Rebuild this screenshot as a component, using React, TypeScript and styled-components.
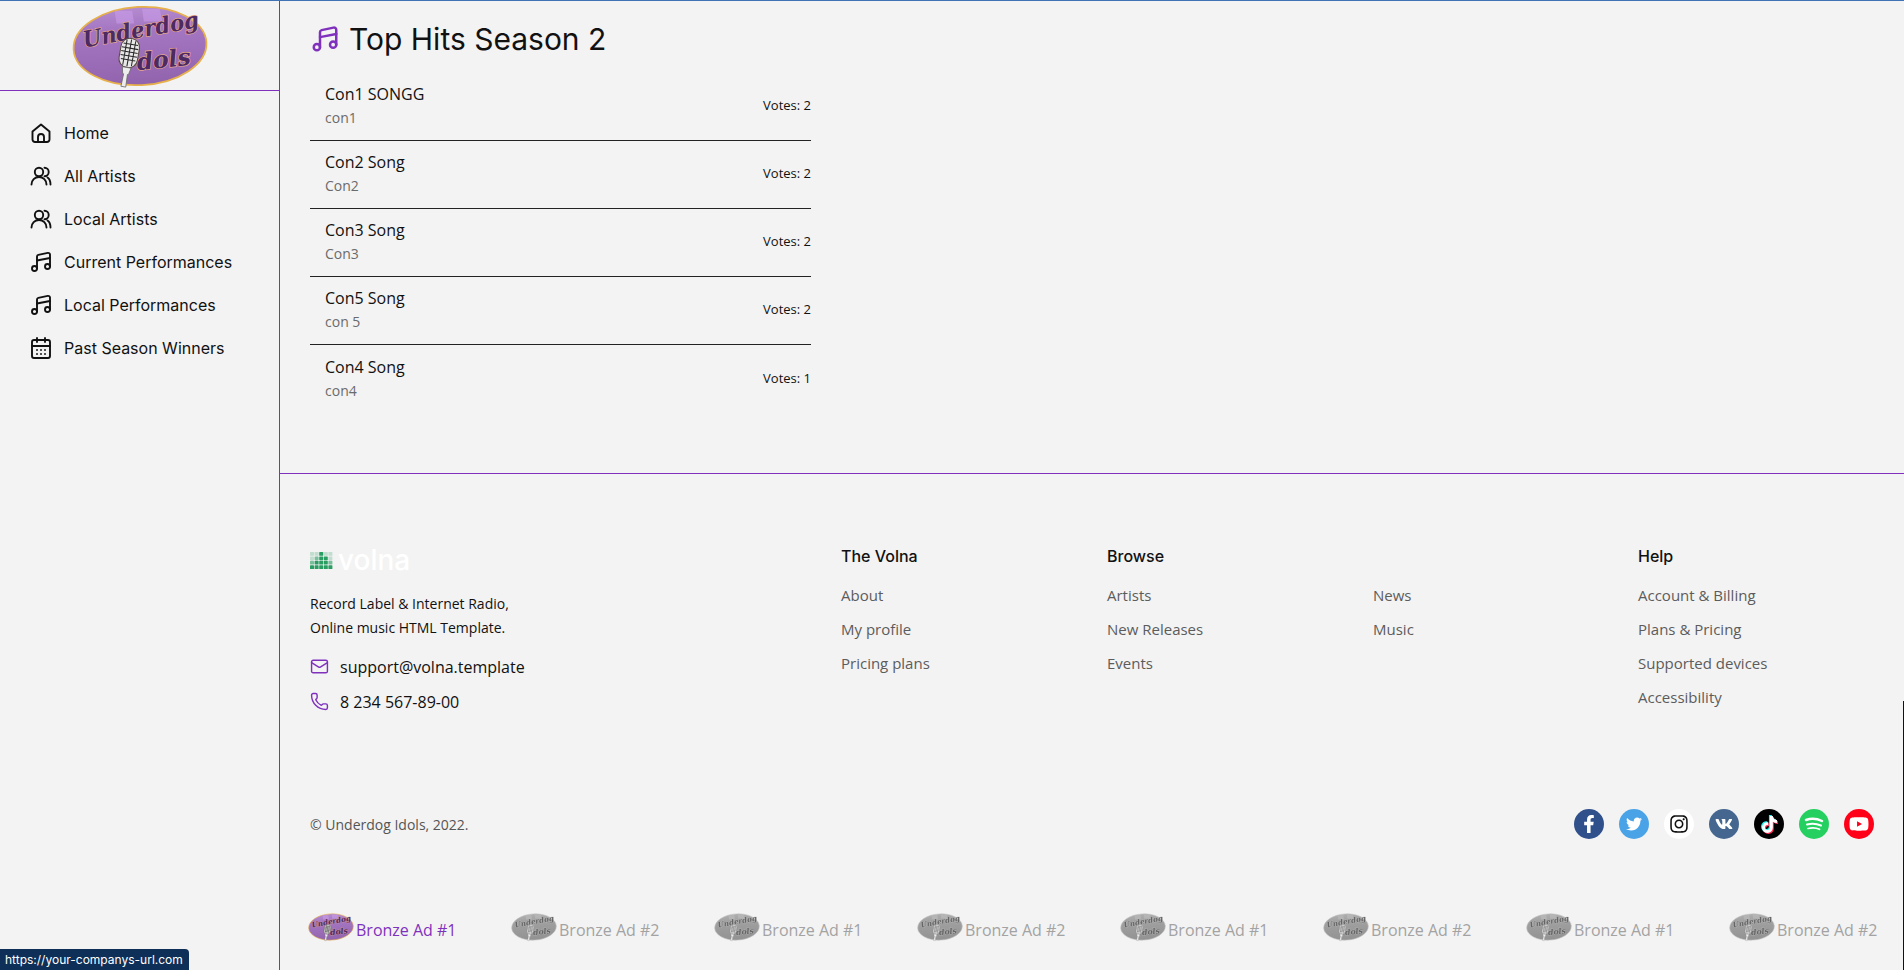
import React, { useId } from 'react'
import styled, { createGlobalStyle } from 'styled-components'
import { CalendarDays, Mail, Phone } from 'lucide-react'
import { FaFacebookF, FaInstagram, FaTiktok, FaTwitter, FaVk, FaYoutube } from 'react-icons/fa'

const purple = '#7f31bd'

const GlobalStyle = createGlobalStyle`
  html, body {
    margin: 0;
    padding: 0;
    height: 100%;
    overflow: hidden;
    background: #f3f3f3;
    font-family: "Open Sans", "Liberation Sans", sans-serif;
    color: #111;
  }
  * { box-sizing: border-box; }
`

const Page = styled.div`
  display: flex;
  height: 970px;
  border-top: 1px solid #3f73b5;
  position: relative;
`

const Sidebar = styled.aside`
  width: 280px;
  flex: none;
  border-right: 1px solid ${purple};
`

const LogoBar = styled.div`
  height: 90px;
  display: flex;
  justify-content: center;
  align-items: center;
  border-bottom: 1px solid ${purple};
`

const Nav = styled.nav`
  display: flex;
  flex-direction: column;
  gap: 15px;
  padding: 28px 0 0 29px;
`

const NavItem = styled.a`
  display: flex;
  align-items: center;
  gap: 11px;
  height: 28px;
  font: 400 16px "Inter", sans-serif;
  color: #111;
  svg { flex: none; }
`

const Main = styled.main`
  flex: 1;
  display: flex;
  flex-direction: column;
  min-width: 0;
`

const Content = styled.section`
  height: 473px;
  padding: 19px 0 0 30px;
  border-bottom: 1px solid ${purple};
`

const Title = styled.h1`
  display: flex;
  align-items: center;
  gap: 9px;
  margin: 0 0 15px;
  height: 38px;
  font: 400 30px "Inter", sans-serif;
  color: #111;
  svg { color: ${purple}; }
`

const SongList = styled.ul`
  width: 501px;
  margin: 0;
  padding: 0;
  list-style: none;
`

const SongRow = styled.li`
  display: flex;
  align-items: center;
  justify-content: space-between;
  height: 68px;
  padding: 0 0 2px 15px;
  border-bottom: 1px solid #222;
  &:last-child { border-bottom: 0; }
`

const SongName = styled.div`
  font-size: 16px;
  line-height: 24px;
  color: #111;
`

const SongArtist = styled.div`
  margin-top: 1px;
  font-size: 14px;
  line-height: 22px;
  color: #6b6b6b;
`

const Votes = styled.div`
  margin-top: -1px;
  font-size: 13px;
  color: #111;
`

const Footer = styled.footer`
  flex: 1;
  padding: 69px 30px 0 30px;
`

const FooterGrid = styled.div`
  display: grid;
  grid-template-columns: 531px 266px 266px 265px 1fr;
  height: 266px;
`

const VolnaLogo = styled.div`
  display: flex;
  align-items: center;
  gap: 5px;
  height: 26px;
  margin-top: 4px;
  font: 500 28px "Inter", sans-serif;
  color: #fff;
`

const About = styled.p`
  margin: 19px 0 9px;
  font-size: 14px;
  line-height: 24px;
  color: #111;
`

const ContactRow = styled.div`
  display: flex;
  align-items: center;
  gap: 11px;
  height: 35px;
  font-size: 16px;
  color: #111;
  svg { color: ${purple}; flex: none; }
`

const ColumnTitle = styled.h4`
  margin: 0 0 9px;
  height: 26px;
  font: 500 16px/26px "Inter", sans-serif;
  color: #111;
`

const FooterLink = styled.a`
  display: block;
  height: 34px;
  font-size: 15px;
  line-height: 34px;
  color: #5c5c5c;
`

const BottomRow = styled.div`
  display: flex;
  align-items: center;
  justify-content: space-between;
  height: 30px;
`

const Copyright = styled.div`
  font-size: 14px;
  color: #555;
`

const Socials = styled.div`
  display: flex;
  gap: 15px;
`

const SocialIcon = styled.a<{ $bg: string; $fg?: string }>`
  width: 30px;
  height: 30px;
  border-radius: 50%;
  display: flex;
  align-items: center;
  justify-content: center;
  background: ${(p) => p.$bg};
  color: ${(p) => p.$fg || '#fff'};
`

const AdRow = styled.div`
  display: grid;
  grid-template-columns: repeat(8, 203px);
  margin-top: 74px;
`

const Ad = styled.a<{ $active?: boolean }>`
  display: flex;
  align-items: center;
  gap: 2px;
  height: 34px;
  margin-left: -2px;
  font-size: 16px;
  white-space: nowrap;
  color: ${(p) => (p.$active ? purple : '#a3a3a3')};
  svg {
    margin-top: -7px;
    opacity: ${(p) => (p.$active ? 1 : 0.75)};
  }
`

const UrlTip = styled.div`
  position: absolute;
  left: 0;
  bottom: 0;
  height: 21px;
  padding: 0 6px 0 5px;
  border-radius: 0 4px 0 0;
  background: #0e2f57;
  color: #fff;
  font: 400 12px/22px "Inter", sans-serif;
`

const ScrollEdge = styled.div`
  position: absolute;
  right: 0;
  top: 700px;
  bottom: 0;
  width: 1px;
  background: #111;
`

type IconProps = { size?: number; strokeWidth?: number }

function HomeIcon({ size = 24, strokeWidth = 1.9 }: IconProps) {
  return (
    <svg width={size} height={size} viewBox="0 0 24 24" fill="none" stroke="currentColor" strokeWidth={strokeWidth} strokeLinejoin="round" strokeLinecap="round">
      <path d="M3.500 10.500 12 3.500l8.500 7V18.500a2.500 2.500 0 0 1-2.500 2.500H6a2.500 2.500 0 0 1-2.500-2.500z" />
      <path d="M9 21v-5a3 3 0 0 1 6 0v5" />
    </svg>
  )
}

function UsersIcon({ size = 24, strokeWidth = 1.9 }: IconProps) {
  return (
    <svg width={size} height={size} viewBox="0 0 24 24" fill="none" stroke="currentColor" strokeWidth={strokeWidth} strokeLinecap="round">
      <circle cx="10" cy="8" r="4.200" />
      <path d="M2.500 20.500c0-4.200 3.300-7.500 7.500-7.500s7.500 3.300 7.500 7.500" />
      <path d="M15.500 3.800a4.200 4.200 0 0 1 0 8.400" />
      <path d="M18.500 13.500c1.900 1.300 3 3.800 3 7" />
    </svg>
  )
}

function MusicIcon({ size = 24, strokeWidth = 1.9 }: IconProps) {
  return (
    <svg width={size} height={size} viewBox="0 0 24 24" fill="none" stroke="currentColor" strokeWidth={strokeWidth} strokeLinejoin="round" strokeLinecap="round">
      <path d="M8 18.500V6.500c0-.8.500-1.400 1.300-1.600l9.500-2c1.100-.2 2.200.6 2.200 1.700v12" />
      <path d="M8 10.500 21 8" />
      <circle cx="5.500" cy="18.500" r="2.500" />
      <circle cx="18.500" cy="16.500" r="2.500" />
    </svg>
  )
}

function Logo({ width, height, gray }: { width: number; height: number; gray?: boolean }) {
  const id = useId()
  return (
    <svg width={width} height={height} viewBox="0 0 140 90" style={gray ? { filter: 'grayscale(1)' } : undefined}>
      <defs>
        <linearGradient id={id} x1="0" y1="0" x2="0" y2="1">
          <stop offset="0" stopColor="#b48bcf" />
          <stop offset="0.25" stopColor="#a678c4" />
          <stop offset="1" stopColor="#9263ad" />
        </linearGradient>
      </defs>
      <ellipse cx="70" cy="45" rx="68" ry="40" fill={`url(#${id})`} stroke="#e6b04a" strokeWidth="1.8" transform="rotate(-3 70 45)" />
      <path d="M44 9h18l2 13H46zM72 7h18l3 13H74z" fill="#c79ae6" opacity="0.65" />
      <text x="72" y="36" textAnchor="middle" transform="rotate(-10 72 36)" fontFamily="DejaVu Serif" fontStyle="italic" fontWeight="700" fontSize="23" fill="#4d2a63" stroke="#e7a98a" strokeWidth="1.400" paintOrder="stroke" textLength="120" lengthAdjust="spacingAndGlyphs">Underdog</text>
      <text x="95" y="67" textAnchor="middle" transform="rotate(-6 95 67)" fontFamily="DejaVu Serif" fontStyle="italic" fontWeight="700" fontSize="24" fill="#4d2a63" stroke="#e7a98a" strokeWidth="1.400" paintOrder="stroke">dols</text>
      <g transform="rotate(10 58 55)">
        <rect x="49" y="37" width="19" height="30" rx="9" fill="#e8e8e8" stroke="#55483a" strokeWidth="1" />
        <path d="M51 43h15M50 47h17M50 51h17M50 55h17M51 59h15M54 39v26M58.500 38v28M63 39v26" stroke="#2b2b2b" strokeWidth="1.100" />
        <path d="M54 67h9l-1.500 7h-1l.5 13h-5l.5-13h-1z" fill="#ededed" stroke="#6b6b6b" strokeWidth="0.800" />
      </g>
    </svg>
  )
}

function Spotify() {
  return (
    <svg width="20" height="16" viewBox="0 0 20 16" fill="none" stroke="#fff" strokeLinecap="round">
      <path d="M2 4c5-1.800 11-1.400 16 1" strokeWidth="2.400" />
      <path d="M3 8.500c4.500-1.300 9.500-1 14 1" strokeWidth="2" />
      <path d="M4 12.500c4-1 8-.8 11.500.8" strokeWidth="1.700" />
    </svg>
  )
}

function VolnaMark() {
  const cells = [
    [0, 0, 0.25], [1, 0, 0.25], [2, 0, 1], [3, 0, 0.25], [4, 0, 0.25],
    [0, 1, 0.25], [1, 1, 0.6], [2, 1, 1], [3, 1, 1], [4, 1, 0.25],
    [0, 2, 0.6], [1, 2, 1], [2, 2, 1], [3, 2, 1], [4, 2, 0.6],
    [0, 3, 1], [1, 3, 1], [2, 3, 1], [3, 3, 1], [4, 3, 1],
  ]
  return (
    <svg width="23" height="17" viewBox="0 0 23 17">
      {cells.map(([x, y, o]) => (
        <rect key={`${x}-${y}`} x={x * 4.6} y={y * 4.4} width="4" height="3.800" rx="0.600" fill="#2a9d63" opacity={o} />
      ))}
    </svg>
  )
}

const navItems = [
  { label: 'Home', Icon: HomeIcon },
  { label: 'All Artists', Icon: UsersIcon },
  { label: 'Local Artists', Icon: UsersIcon },
  { label: 'Current Performances', Icon: MusicIcon },
  { label: 'Local Performances', Icon: MusicIcon },
  { label: 'Past Season Winners', Icon: CalendarDays },
]

const songs = [
  { name: 'Con1 SONGG', artist: 'con1', votes: 2 },
  { name: 'Con2 Song', artist: 'Con2', votes: 2 },
  { name: 'Con3 Song', artist: 'Con3', votes: 2 },
  { name: 'Con5 Song', artist: 'con 5', votes: 2 },
  { name: 'Con4 Song', artist: 'con4', votes: 1 },
]

const linkColumns = [
  { title: 'The Volna', links: ['About', 'My profile', 'Pricing plans'] },
  { title: 'Browse', links: ['Artists', 'New Releases', 'Events'] },
  { title: '\u00a0', links: ['News', 'Music'] },
  { title: 'Help', links: ['Account & Billing', 'Plans & Pricing', 'Supported devices', 'Accessibility'] },
]

const ads = [1, 2, 1, 2, 1, 2, 1, 2]

export default function App() {
  return (
    <>
      <GlobalStyle />
      <Page>
        <Sidebar>
          <LogoBar>
            <Logo width={140} height={88} />
          </LogoBar>
          <Nav>
            {navItems.map(({ label, Icon }) => (
              <NavItem key={label}>
                <Icon size={24} strokeWidth={1.9} />
                {label}
              </NavItem>
            ))}
          </Nav>
        </Sidebar>
        <Main>
          <Content>
            <Title>
              <MusicIcon size={30} strokeWidth={2} />
              Top Hits Season 2
            </Title>
            <SongList>
              {songs.map((s) => (
                <SongRow key={s.name}>
                  <div>
                    <SongName>{s.name}</SongName>
                    <SongArtist>{s.artist}</SongArtist>
                  </div>
                  <Votes>Votes: {s.votes}</Votes>
                </SongRow>
              ))}
            </SongList>
          </Content>
          <Footer>
            <FooterGrid>
              <div>
                <VolnaLogo>
                  <VolnaMark />
                  volna
                </VolnaLogo>
                <About>
                  Record Label &amp; Internet Radio,
                  <br />
                  Online music HTML Template.
                </About>
                <ContactRow>
                  <Mail size={19} strokeWidth={1.8} />
                  support@volna.template
                </ContactRow>
                <ContactRow>
                  <Phone size={19} strokeWidth={1.8} />
                  8 234 567-89-00
                </ContactRow>
              </div>
              {linkColumns.map((col) => (
                <div key={col.links[0]}>
                  <ColumnTitle>{col.title}</ColumnTitle>
                  {col.links.map((l) => (
                    <FooterLink key={l}>{l}</FooterLink>
                  ))}
                </div>
              ))}
            </FooterGrid>
            <BottomRow>
              <Copyright>© Underdog Idols, 2022.</Copyright>
              <Socials>
                <SocialIcon $bg="#30508c"><FaFacebookF size={18} /></SocialIcon>
                <SocialIcon $bg="#4ba3e7"><FaTwitter size={16} /></SocialIcon>
                <SocialIcon $bg="#ffffff" $fg="#111"><FaInstagram size={20} /></SocialIcon>
                <SocialIcon $bg="#45668e"><FaVk size={18} /></SocialIcon>
                <SocialIcon $bg="#000000">
                  <FaTiktok size={17} style={{ filter: 'drop-shadow(-1px -1px 0 #25f4ee) drop-shadow(1px 1px 0 #fe2c55)' }} />
                </SocialIcon>
                <SocialIcon $bg="#25d060"><Spotify /></SocialIcon>
                <SocialIcon $bg="#ff0018"><FaYoutube size={20} /></SocialIcon>
              </Socials>
            </BottomRow>
            <AdRow>
              {ads.map((n, i) => (
                <Ad key={i} $active={i === 0}>
                  <Logo width={46} height={30} gray={i !== 0} />
                  Bronze Ad #{n}
                </Ad>
              ))}
            </AdRow>
          </Footer>
        </Main>
        <UrlTip>https://your-companys-url.com</UrlTip>
        <ScrollEdge />
      </Page>
    </>
  )
}
